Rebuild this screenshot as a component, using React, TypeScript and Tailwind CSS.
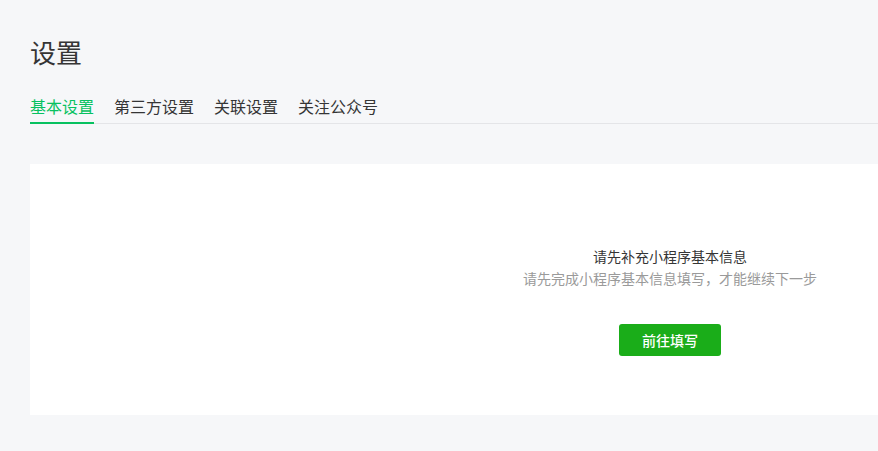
const tabs = ['基本设置', '第三方设置', '关联设置', '关注公众号']

export default function App() {
  return (
    <div
      className="h-screen w-screen overflow-hidden bg-[#f6f7f9]"
      style={{ fontFamily: '"Noto Sans CJK SC", "Noto Sans", sans-serif' }}
    >
      <div className="w-[1340px] px-[30px] pt-[34px]">
        <h1 className="text-[26px] leading-[36px] font-normal text-[#353535]">设置</h1>

        <div className="mt-[24px] flex gap-5 border-b border-[#e4e5e8]">
          {tabs.map((t, i) => (
            <div
              key={t}
              className={`-mb-px pb-[4px] text-[16px] leading-6 border-b-2 ${
                i === 0 ? 'border-[#07c160] text-[#07c160]' : 'border-transparent text-[#353535]'
              }`}
            >
              {t}
            </div>
          ))}
        </div>

        <div className="mt-10 flex h-[251px] w-[1280px] flex-col items-center bg-white pt-[82px]">
          <div className="text-[14px] leading-5 text-[#353535]">请先补充小程序基本信息</div>
          <div className="mt-[2px] text-[14px] leading-5 text-[#9a9a9a]">
            请先完成小程序基本信息填写，才能继续下一步
          </div>
          <button
            type="button"
            className="mt-[36px] h-8 w-[102px] rounded-[3px] bg-[#1aad19] text-[14px] font-medium text-white"
          >
            前往填写
          </button>
        </div>
      </div>
    </div>
  )
}
